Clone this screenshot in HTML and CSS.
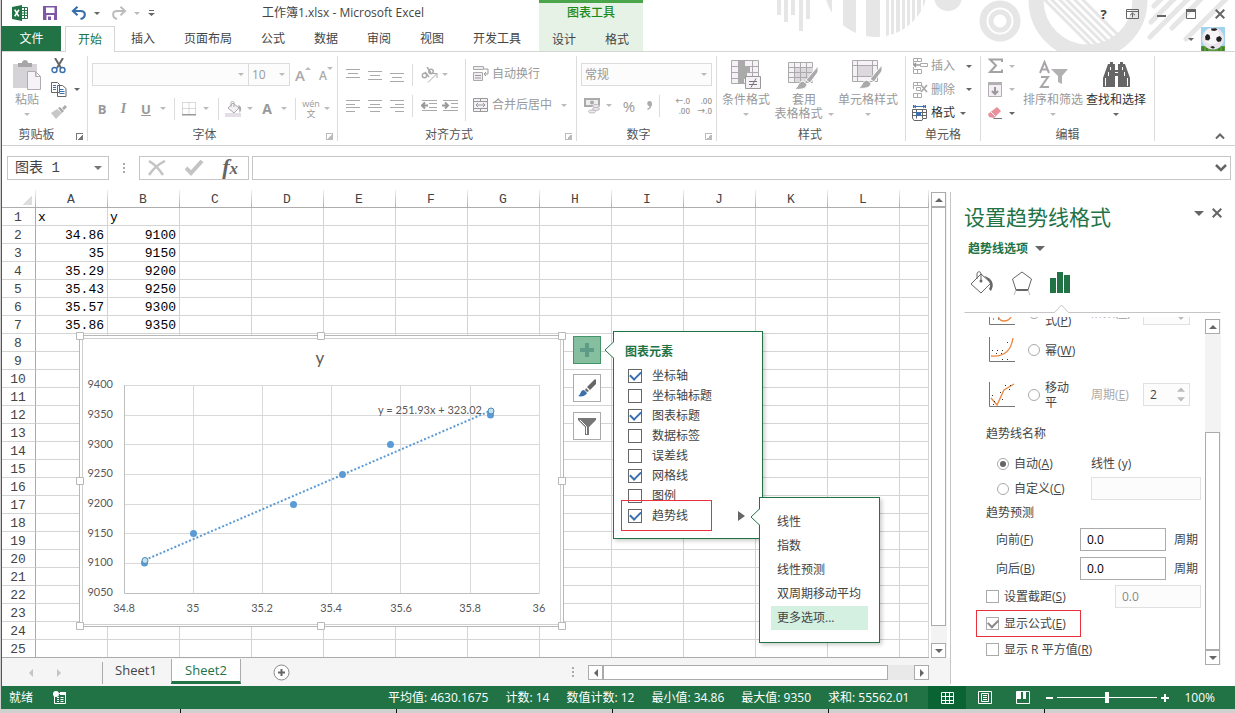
FILE: index.html
```html
<!DOCTYPE html>
<html lang="zh-CN">
<head>
<meta charset="utf-8">
<title>工作簿1.xlsx - Microsoft Excel</title>
<link rel="stylesheet" href="styles.css">
</head>
<body>
<div class="window">
<header class="header">
  <svg class="header-art" width="475" height="51" viewBox="760 0 475 51" aria-hidden="true">
    <defs>
      <clipPath id="disc"><circle cx="876" cy="-15" r="52"/></clipPath>
      <clipPath id="hole"><circle cx="1088" cy="0" r="46"/></clipPath>
    </defs>
    <g fill="#e6e6e6">
      <path d="M777 0h4v15h-4zM784 0h4v22h-4zM791 0h4v15h-4zM799 0h4v31h-4zM806 0h4v19h-4z"/>
      <path clip-path="url(#disc)" d="M822 0h10v51h-10zM843 0h13v51h-13zM866 0h14v51h-14zM886 0h3v51h-3zM891 0h3v51h-3zM896 0h4v51h-4zM902 0h3v51h-3zM907 0h3v51h-3zM912 0h3v51h-3zM917 0h4v51h-4zM923 0h3v51h-3z"/>
      <circle cx="948" cy="-3" r="14"/>
    </g>
    <g fill="none" stroke="#e6e6e6">
      <circle cx="1000" cy="21" r="17" stroke-width="7"/>
      <circle cx="1000" cy="21" r="9" stroke-width="5"/>
      <circle cx="1088" cy="0" r="52" stroke-width="15"/>
      <path clip-path="url(#hole)" stroke-width="3" d="M1036-9l65 65M1043-9l65 65M1051-9l65 65M1058-9l65 65M1066-9l65 65M1074-9l65 65"/>
      <path stroke-width="5" stroke-linecap="round" d="M1154 6l12-12M1151 22l28-28M1150 37l43-43M1172 28l34-34M1189 36l42-42M1186 39l10-10"/>
    </g>
  </svg>
  <div class="header-main">
    <div class="titlebar">
      <div class="quick">
        <svg width="17" height="16" viewBox="0 0 17 16"><path fill="#217346" d="M0 2l10-2v16L0 14z"/><path fill="none" stroke="#217346" d="M10 2.500h5.500v11H10M12.500 3v10M10 5.500h5M10 8h5M10 10.500h5"/><path stroke="#fff" stroke-width="1.600" d="M2.700 4.700l4 6.600M6.900 4.700l-4.200 6.600"/></svg>
        <button class="bare" aria-label="保存"><svg width="14" height="14" viewBox="0 0 14 14"><path fill="#7e57a5" d="M0 0h14v14H0z"/><path fill="#fff" d="M3 1.500h8.500V7H3zM3.500 9h7.500v5H3.500z"/><path fill="#7e57a5" d="M5 10.500h3V14H5z"/></svg></button>
        <button class="bare with-caret" aria-label="撤消"><svg width="16" height="14" viewBox="0 0 16 14"><path fill="none" stroke="#3a6fae" stroke-width="2.200" d="M6.500 .8L2 5l4.500 4.200M2 5h7.500c6 0 5.500 6.500 0 8"/></svg><i class="caret"></i></button>
        <button class="bare with-caret off" aria-label="恢复"><svg width="16" height="14" viewBox="0 0 16 14"><path fill="none" stroke="#bcbcbc" stroke-width="2" d="M9.500 .8L14 5 9.500 9.200M14 5H6.500C.5 5 1 11.500 6 13"/></svg><i class="caret"></i></button>
        <button class="bare" aria-label="自定义快速访问工具栏"><svg width="7" height="6" viewBox="0 0 7 6"><path fill="#666" d="M1 0h5v1H1zM0 3h7L3.500 6z"/></svg></button>
      </div>
      <div class="title">工作簿1.xlsx - Microsoft Excel</div>
    </div>
    <nav class="tabs">
      <button class="tab file">文件</button><button class="tab active">开始</button><button class="tab">插入</button><button class="tab">页面布局</button><button class="tab">公式</button><button class="tab">数据</button><button class="tab">审阅</button><button class="tab">视图</button><button class="tab">开发工具</button>
    </nav>
  </div>
  <div class="context">
    <div class="context-title">图表工具</div>
    <nav class="tabs"><button class="tab">设计</button><button class="tab">格式</button></nav>
  </div>
  <div class="header-end">
    <div class="win-buttons">
      <button class="bare help" aria-label="帮助">?</button>
      <button class="bare" aria-label="功能区显示选项"><svg width="13" height="10" viewBox="0 0 13 10"><path fill="none" stroke="#666" d="M.5 .5h12v9H.5zM.5 2.500h12M6.500 8.500V4M4 6.200L6.500 4 9 6.200"/></svg></button>
      <button class="bare" aria-label="最小化"><svg width="9" height="10" viewBox="0 0 9 10"><path fill="#666" d="M0 6h9v2H0z"/></svg></button>
      <button class="bare" aria-label="最大化"><svg width="10" height="10" viewBox="0 0 10 10"><path fill="none" stroke="#666" d="M.5 1h9v8.500h-9z"/><path fill="#666" d="M0 0h10v3H0z"/></svg></button>
      <button class="bare" aria-label="关闭"><svg width="10" height="10" viewBox="0 0 10 10"><path stroke="#666" stroke-width="2" d="M.7 .7l8.600 8.600M9.300 .7L.7 9.300"/></svg></button>
    </div>
    <div class="account">
      <i class="caret"></i>
      <svg width="24" height="24" viewBox="0 0 24 24"><path fill="#9fd3ee" d="M0 0h24v24H0z"/><path fill="#5a9a3c" d="M0 19h24v5H0z"/><path stroke="#2f6d21" d="M2 20v4M6 21v3M18 21v3M22 20v4"/><circle cx="12" cy="11.500" r="11" fill="#e9e3ea"/><circle cx="11" cy="9.500" r="8" fill="#f8f5f8"/><path fill="#222" d="M10 1.500l5-.2 1.500 1.500-3 1.200-3-.6zM4 9.500l2-2.500 2.500 1 .8 3.500L7.500 13.500 4.500 13zM15.500 10.500l3-1.500 2.300 2.300-.8 3-3 .7-1.800-2zM9 20l3-1 2 1.500-2 1.200z"/></svg>
    </div>
  </div>
</header>

<section class="ribbon">
  <div class="group g-clip launch">
    <div class="group-body">
      <button class="big"><svg width="28" height="30" viewBox="0 0 28 30"><path fill="#d6d3d6" d="M0 4h24v24H0z"/><path fill="#a9a6a9" d="M5 3h4c0-4 6-4 6 0h4v4H5z"/><path fill="#f6f3f8" stroke="#b0adb2" d="M14.500 11.500h8l5 5v13h-13zM22.500 11.500v5h5"/></svg><span>粘贴</span><i class="caret"></i></button>
      <div class="stack3">
        <button class="bare"><svg width="16" height="16" viewBox="0 0 16 16"><path stroke="#666" stroke-width="2" d="M4 0l6 10M12 0L6 10"/><g fill="none" stroke="#3a6fae" stroke-width="1.400"><circle cx="3.500" cy="12" r="2.500"/><circle cx="11.500" cy="12" r="2.500"/></g></svg></button>
        <button class="bare with-caret"><svg width="16" height="15" viewBox="0 0 16 15"><g fill="#fff" stroke="#666"><path d="M.5 .5h6l2 2v8h-8zM6.500 3.500h5l3.500 3v8H6.500z"/></g><path stroke="#3a6fae" d="M2 3.500h3M2 5.500h3M2 7.500h3M8.500 7.500h4M8.500 9.500h5M8.500 11.500h5"/></svg><i class="caret"></i></button>
        <button class="bare"><svg width="16" height="14" viewBox="0 0 16 14"><path fill="#c9c6ca" d="M0 8l6-4 5 4-6 6z"/><path fill="#aaa" d="M7 3l2-1 4 4-2 2zM11 3l3-3 2 2-3 3z"/></svg></button>
      </div>
    </div>
    <div class="group-name">剪贴板</div><i class="launcher dark"></i>
  </div>
  <div class="group g-font off launch">
    <div class="group-body rows">
      <div class="font-row1"><div class="combo"><span></span><i class="caret"></i></div><div class="combo"><span>10</span><i class="caret"></i></div><div class="grow"><b>A</b><i class="caret flip"></i></div><div class="shrink"><b>A</b><i class="caret"></i></div></div>
      <div class="font-row2">
        <button class="bare"><b>B</b></button><button class="bare"><em>I</em></button><button class="bare"><u>U</u></button><i class="caret"></i><i class="sep"></i>
        <svg width="14" height="14" viewBox="0 0 14 14"><path fill="none" stroke="#b9b6b9" stroke-dasharray="1 1" d="M.5 .5h13v12H.5zM7 .5v12M.5 6.500h13"/><path fill="#999" d="M0 12h14v1.500H0z"/></svg><i class="caret"></i><i class="sep"></i>
        <svg width="17" height="16" viewBox="0 0 17 16"><path fill="#e4dfe6" d="M0 12h16v4H0z"/><path fill="#f4f0f5" stroke="#aaa" d="M3 7l5-5 6 5-5 5z"/><path fill="none" stroke="#aaa" d="M6 6V1.500C6 0 9 0 9 1.500V6"/><path fill="#aaa" d="M13 4c4 1 4 5 1.500 8L14 7z"/></svg><i class="caret"></i><button class="bare fontcolor"><b>A</b></button><i class="caret"></i><i class="sep"></i>
        <span class="pinyin">wén<br>文</span><i class="caret"></i>
      </div>
    </div>
    <div class="group-name">字体</div><i class="launcher"></i>
  </div>
  <div class="group g-align off launch">
    <div class="group-body">
      <div class="align-grid">
        <svg width="14" height="14"><path stroke="#aaa" d="M0 1.500h14M2 5.500h10M0 9.500h14"/></svg>
        <svg width="14" height="14"><path stroke="#aaa" d="M0 3.500h14M2 7.500h10M0 11.500h14"/></svg>
        <svg width="14" height="14"><path stroke="#aaa" d="M0 5.500h14M2 9.500h10M0 13.500h14"/></svg>
        <i class="sep"></i>
        <svg width="17" height="16" viewBox="0 0 17 16"><path fill="none" stroke="#aaa" d="M7 15.500l9-9M12 6.500h4V11"/><g fill="none" stroke="#aaa" stroke-width="1.500"><circle cx="3.500" cy="8.500" r="2.200"/><path d="M4 5l4 5"/><circle cx="10" cy="4.500" r="2.200"/><path d="M6 0l4 6"/></g></svg>
        <i class="caret"></i>
        <svg width="14" height="12"><path stroke="#aaa" d="M0 .5h14M0 4.500h9M0 7.500h14M0 11.500h9"/></svg>
        <svg width="14" height="12"><path stroke="#aaa" d="M0 .5h14M2 4.500h10M0 7.500h14M2 11.500h10"/></svg>
        <svg width="14" height="12"><path stroke="#aaa" d="M0 .5h14M5 4.500h9M0 7.500h14M5 11.500h9"/></svg>
        <i class="sep"></i>
        <svg width="17" height="12"><path stroke="#aaa" d="M1 .5h15M8 3.500h8M8 7.500h8M1 10.500h15"/><path fill="none" stroke="#999" stroke-width="2" d="M7 5.500H1M4 2.500l-3 3 3 3"/></svg>
        <svg width="17" height="12"><path stroke="#aaa" d="M1 .5h15M9 3.500h7M9 7.500h7M1 10.500h15"/><path fill="none" stroke="#999" stroke-width="2" d="M0 5.500h6M3 2.500l3 3-3 3"/></svg>
      </div>
      <div class="align-text">
        <button class="bare row"><svg width="16" height="16" viewBox="0 0 16 16"><path fill="#efebf1" stroke="#aaa" d="M.5 .5h10v3H.5zM.5 6.500h9v8H.5z"/><path fill="none" stroke="#999" d="M2 9.500h6M2 12h6M11 3h4v5h-4M13 6l-2 2 2 2"/></svg><span>自动换行</span></button>
        <button class="bare row"><svg width="16" height="15" viewBox="0 0 16 15"><path fill="#f4f1f6" stroke="#999" d="M.5 .5h14v13H.5zM.5 3.500h14M.5 10.500h14M7.500 .5v3M7.500 10.500v3M3 7h9M5 5L3 7l2 2M10 5l2 2-2 2"/></svg><span>合并后居中</span><i class="caret"></i></button>
      </div>
    </div>
    <div class="group-name">对齐方式</div><i class="launcher"></i>
  </div>
  <div class="group g-num off launch">
    <div class="group-body rows">
      <div class="combo"><span>常规</span><i class="caret"></i></div>
      <div class="num-row"><svg width="17" height="16" viewBox="0 0 17 16"><path fill="#eee" stroke="#aaa" stroke-width="2" d="M1 1h14v7H1z"/><circle cx="8" cy="4.500" r="2" fill="#aaa"/><g fill="#efe9f0" stroke="#bbb"><ellipse cx="12" cy="8" rx="3.500" ry="1.500"/><ellipse cx="12" cy="11" rx="3.500" ry="1.500"/><ellipse cx="8" cy="13.500" rx="3.500" ry="1.500"/></g></svg><i class="caret"></i><button class="bare pct">%</button><button class="bare comma" aria-label="千位分隔样式"><svg width="5" height="9" viewBox="0 0 5 9"><path fill="#aaa" d="M2.500 0C6 0 6 6 1 9L0 8c2-1 2.500-2 2.500-3C-.5 5-.5 0 2.500 0z"/></svg></button><i class="sep"></i><span class="dec">←.0<br>.00</span><span class="dec">.00<br>→.0</span></div>
    </div>
    <div class="group-name">数字</div><i class="launcher"></i>
  </div>
  <div class="group g-style off">
    <div class="group-body">
      <button class="big"><svg width="31" height="30" viewBox="0 0 31 30"><path fill="#f6f1f7" stroke="#aaa" d="M.5 .5h27v23H.5zM7.500 .5v23M21.500 .5v23M.5 6.500h27M.5 12.500h27M.5 18.500h27"/><path fill="#aaa" d="M8 1h6v5H8zM8 7h11v5H8zM8 13h8v5H8zM8 19h5v5H8z"/><path fill="#f6f1f7" stroke="#999" d="M14.500 16.500h15v12h-15z"/><path stroke="#777" d="M18 21.500h8M18 24.500h8M25 18.500l-5 9"/></svg><span>条件格式</span><i class="caret"></i></button>
      <button class="big"><svg width="31" height="30" viewBox="0 0 31 30"><path fill="#f6f1f7" stroke="#aaa" d="M.5 2.500h24v20H.5z"/><path fill="#dcd8de" d="M7 7h18v15H7z"/><path fill="none" stroke="#aaa" d="M6.500 2v20M12.500 2v20M18.500 2v20M.5 7.500h24M.5 12.500h24M.5 17.500h24"/><path fill="#aaa" stroke="#fff" d="M30 6v6l-8 11-4-3zM6 29c5-1 3-7 9-8l4 3c0 5-7 6-13 5z"/></svg><span>套用<br>表格格式<i class="caret"></i></span></button>
      <button class="big"><svg width="31" height="30" viewBox="0 0 31 30"><path fill="#f6f1f7" stroke="#aaa" d="M.5 .5h25v21H.5zM5.500 .5v21M20.500 .5v21M.5 5.500h25M.5 16.500h25"/><path fill="#dcd8de" d="M6 6h14v10H6z"/><path fill="#aaa" stroke="#fff" d="M30 5v6l-8 11-4-3zM6 28c5-1 3-7 9-8l4 3c0 5-7 6-13 5z"/></svg><span>单元格样式</span><i class="caret"></i></button>
    </div>
    <div class="group-name">样式</div>
  </div>
  <div class="group g-cell">
    <div class="group-body cell-rows">
      <button class="bare row dim"><svg width="16" height="16" viewBox="0 0 16 16"><path fill="none" stroke="#aaa" d="M1.500 .5h8v3h-8zM5.500 .5v3M1.500 11.500h8v4h-8zM5.500 11.500v4M1.500 4v3M1.500 9v2M8.500 5.500h7v3h-7z"/><path fill="none" stroke="#999" stroke-width="1.500" d="M8 7H2M4 5L2 7l2 2"/></svg><span>插入</span><i class="caret"></i></button>
      <button class="bare row dim"><svg width="16" height="16" viewBox="0 0 16 16"><path fill="none" stroke="#aaa" d="M1.500 .5h8v3h-8zM5.500 .5v3M1.500 11.500h8v4h-8zM5.500 11.500v4M1.500 4v3M4.500 5.500h4v3h-4z"/><path stroke="#aaa" stroke-width="1.800" d="M9 3l6 7M15 3l-6 7"/></svg><span>删除</span><i class="caret"></i></button>
      <button class="bare row"><svg width="16" height="16" viewBox="0 0 16 16"><path fill="none" stroke="#3a6fae" d="M1.500 0v3M13.500 0v3M1 1.500h13M4 0L2 1.500 4 3M11 0l2 1.500L11 3"/><path fill="none" stroke="#666" d="M.5 4.500h14v9H11l-1 2H2L.5 13zM4.500 4.500v9M10.500 4.500v9M.5 7.500h14M.5 10.500h14"/><path fill="#3a6fae" d="M4 7h5v4H4z"/></svg><span>格式</span><i class="caret near"></i></button>
    </div>
    <div class="group-name">单元格</div>
  </div>
  <div class="group g-edit">
    <div class="group-body">
      <div class="cell-rows edit-rows">
        <button class="bare row off"><svg width="15" height="16" viewBox="0 0 15 16"><path fill="none" stroke="#a5a2a5" stroke-width="2" d="M14 4V1.500H2L8 7.500 2 14h12v-2.500"/></svg><i class="caret"></i></button>
        <button class="bare row off"><svg width="15" height="15" viewBox="0 0 15 15"><path fill="#f3eff5" stroke="#b3b0b3" d="M.5 .5h13v14H.5z"/><path fill="#b3b0b3" d="M0 0h14v3H0z"/><path fill="none" stroke="#999" stroke-width="2" d="M7 5v7M4 9l3 3 3-3"/></svg><i class="caret"></i></button>
        <button class="bare row"><svg width="15" height="13" viewBox="0 0 15 13"><path fill="#e8909c" d="M9 0l4 4-7 7-5-1-1-3z"/><path stroke="#fff" d="M3 5l4 4"/><path fill="#777" d="M6 11h8v1H5z"/></svg><i class="caret"></i></button>
      </div>
      <button class="big off"><svg width="29" height="28" viewBox="0 0 29 28"><path fill="none" stroke="#a9a6a9" stroke-width="2" d="M1 12L5.500 1 10 12M3 8.500h5M2 16h7L2 26h8"/><path fill="#b3b0b3" d="M12 8h17l-6 7v8l-4-2v-6z"/></svg><span>排序和筛选</span><i class="caret"></i></button>
      <button class="big"><svg width="27" height="26" viewBox="0 0 27 26"><path fill="#666" d="M5 2h2V0h3v2h2v6h3V2h2V0h3v2h2l5 14v9H15v-11h-3v11H0v-9z"/><path stroke="#fff" fill="none" d="M2.500 16v8M24.500 16v8M7.500 5v3M19.500 5v3M5.500 10v4M21.500 10v4M12 10.500h3"/></svg><span>查找和选择</span><i class="caret"></i></button>
    </div>
    <div class="group-name">编辑</div>
  </div>
  <button class="bare collapse" aria-label="折叠功能区"><svg width="10" height="7" viewBox="0 0 10 7"><path fill="none" stroke="#666" stroke-width="2" d="M1 5.500l4-4 4 4"/></svg></button>
</section>

<section class="formula-bar">
  <div class="namebox"><span>图表 1</span><i class="caret"></i></div>
  <i class="dots"></i>
  <div class="fx-box">
    <button class="bare" aria-label="取消"><svg width="18" height="16" viewBox="0 0 18 16"><path fill="none" stroke="#c4c4c4" stroke-width="2.500" d="M1 1c5 3 10 8 14 14M17 1C11 4 5 9 1 15"/></svg></button>
    <button class="bare" aria-label="输入"><svg width="19" height="16" viewBox="0 0 19 16"><path fill="none" stroke="#c4c4c4" stroke-width="4" d="M1 8l5 5L17 1"/></svg></button>
    <button class="bare fx" aria-label="插入函数"><i>f<small>x</small></i></button>
  </div>
  <label class="formula"><input type="text" aria-label="编辑栏"><svg width="12" height="8" viewBox="0 0 12 8"><path fill="none" stroke="#666" stroke-width="2.500" d="M1 1l5 5 5-5"/></svg></label>
</section>

<main class="main">
  <section class="book">
    <div class="sheet-row">
      <div class="sheet">
        <table class="grid" id="grid"></table>
        <figure class="chart">
          <svg width="486" height="296" viewBox="78 333 486 296">
            <path fill="#fff" stroke="#b8b8b8" d="M79.500 335.500h484v291h-484z"/>
            <path fill="none" stroke="#d0d0d0" d="M82.500 338.500h478v286h-478z"/>
            <path fill="none" stroke="#d9d9d9" d="M124 385.500h415M124 415.500h415M124 444.500h415M124 474.500h415M124 504.500h415M124 533.500h415M124 563.500h415M193.500 385v208M262.500 385v208M331.500 385v208M400.500 385v208M470.500 385v208M539.500 385v208"/>
            <path fill="none" stroke="#bfbfbf" d="M124.500 385v208.500h415"/>
            <g class="axis end"><text x="113" y="388">9400</text><text x="113" y="418">9350</text><text x="113" y="448">9300</text><text x="113" y="477">9250</text><text x="113" y="507">9200</text><text x="113" y="537">9150</text><text x="113" y="566">9100</text><text x="113" y="596">9050</text></g>
            <g class="axis mid"><text x="124" y="612">34.8</text><text x="193" y="612">35</text><text x="262" y="612">35.2</text><text x="331" y="612">35.4</text><text x="401" y="612">35.6</text><text x="470" y="612">35.8</text><text x="539" y="612">36</text></g>
            <text class="chart-title" x="320" y="364">y</text>
            <text class="equation" x="378" y="414">y = 251.93x + 323.02</text>
            <path stroke="#5b9bd5" stroke-width="2" stroke-dasharray="2 2" d="M145 560L490 411"/>
            <g fill="#5b9bd5"><circle cx="144.500" cy="563" r="3.500"/><circle cx="193.500" cy="533.500" r="3.500"/><circle cx="293.500" cy="504.500" r="3.500"/><circle cx="342.500" cy="474.500" r="3.500"/><circle cx="390.500" cy="444.500" r="3.500"/><circle cx="490.500" cy="415" r="3.500"/></g>
            <g fill="#bfe3f2" stroke="#4f86b0"><circle cx="145" cy="560.500" r="3"/><circle cx="491" cy="411" r="3"/></g>
            <g fill="#fff" stroke="#b8b8b8"><path d="M76.500 332.500h7v7h-7zM317.500 332.500h7v7h-7zM558.500 332.500h7v7h-7zM76.500 477.500h7v7h-7zM558.500 477.500h7v7h-7zM76.500 622.500h7v7h-7zM317.500 622.500h7v7h-7zM558.500 622.500h7v7h-7z"/></g>
          </svg>
        </figure>
        <div class="chart-tools">
          <button class="on" aria-label="图表元素"><svg width="14" height="14"><path fill="#5f9c88" d="M5 0h4v5h5v4H9v5H5V9H0V5h5z"/></svg></button>
          <button aria-label="图表样式"><svg width="18" height="18" viewBox="0 0 18 18"><path fill="#666" d="M17 0l1 1v4l-6 6-3-3z"/><path fill="#666" d="M8 9l3 3-2 1-2-2z"/><path fill="#3a6fae" d="M0 17c3-1 2-6 6-6l3 3c-1 3-6 4-9 3z"/></svg></button>
          <button aria-label="图表筛选器"><svg width="18" height="17" viewBox="0 0 18 17"><path fill="#777" d="M0 0h18v2l-7 7v8H7V9L0 2z"/><path fill="none" stroke="#fff" d="M2 2l6.500 6.500V16"/></svg></button>
        </div>
        <div class="popup elements">
          <svg class="notch" width="10" height="18" viewBox="0 0 10 18"><path fill="#fff" stroke="#217346" d="M10 .5L1 9l9 8.500"/></svg>
          <h3>图表元素</h3>
          <label><input type="checkbox" checked><span>坐标轴</span></label>
          <label><input type="checkbox"><span>坐标轴标题</span></label>
          <label><input type="checkbox" checked><span>图表标题</span></label>
          <label><input type="checkbox"><span>数据标签</span></label>
          <label><input type="checkbox"><span>误差线</span></label>
          <label><input type="checkbox" checked><span>网格线</span></label>
          <label><input type="checkbox"><span>图例</span></label>
          <label><input type="checkbox" checked><span>趋势线</span><i class="more"></i></label>
          <div class="mark"></div>
        </div>
        <div class="popup submenu">
          <svg class="notch" width="10" height="18" viewBox="0 0 10 18"><path fill="#fff" stroke="#217346" d="M10 .5L1 9l9 8.500"/></svg>
          <button>线性</button><button>指数</button><button>线性预测</button><button>双周期移动平均</button><button class="hot">更多选项...</button>
        </div>
      </div>
      <div class="scroll-v"><i class="sb up"></i><i class="thumb"></i><i class="sb down"></i></div>
    </div>
    <div class="sheet-tabs">
      <div class="nav"><i class="tri left"></i><i class="tri right"></i></div>
      <button class="stab">Sheet1</button><button class="stab current">Sheet2</button>
      <button class="bare add" aria-label="新工作表"><svg width="17" height="17" viewBox="0 0 17 17"><circle cx="8.500" cy="8.500" r="7.500" fill="#fff" stroke="#888"/><path stroke="#666" stroke-width="2" d="M8.500 5v7M5 8.500h7"/></svg></button>
      <i class="dots"></i>
      <div class="scroll-h"><i class="sb lt"></i><i class="thumb"></i><i class="sb rt"></i></div>
    </div>
  </section>

  <aside class="pane">
    <div class="pane-head"><h2>设置趋势线格式</h2><i class="caret big-caret"></i><button class="bare" aria-label="关闭窗格"><svg width="10" height="10" viewBox="0 0 10 10"><path stroke="#666" stroke-width="2" d="M.7 .7l8.600 8.600M9.300 .7L.7 9.300"/></svg></button></div>
    <div class="pane-sub">趋势线选项<i class="caret big-caret"></i></div>
    <div class="pane-icons">
      <svg width="24" height="24" viewBox="0 0 24 24"><path fill="none" stroke="#666" d="M1 13L11 3l10 9-10 10zM7 8V3c0-3 4-3 4 0v7"/><circle cx="11" cy="10" r="1.500" fill="#666"/><path fill="#666" d="M14 5c8 2 11 8 7 15l-2-2c3-5 0-8-5-13z"/></svg>
      <svg width="22" height="24" viewBox="0 0 22 24"><path fill="none" stroke="#666" d="M11 1l9.500 7-3.500 11H5L1.500 8z"/><path stroke="#666" stroke-width="2" d="M5 19h12"/><path fill="none" stroke="#bbb" d="M5 19l-2 5M17 19l2 5"/></svg>
      <svg width="20" height="22" viewBox="0 0 20 22"><path fill="#217346" d="M0 6h6v15H0zM7 0h6v21H7zM14 3h6v18h-6z"/></svg>
    </div>
    <svg class="pane-line" height="9" viewBox="0 0 256 9"><path fill="none" stroke="#c6c6c6" d="M0 8.500h90l7-7.500 7 7.500h152"/></svg>
    <div class="pane-scroll">
      <form class="options">
        <div class="opt poly"><svg width="27" height="26" viewBox="0 0 27 26"><path fill="none" stroke="#777" d="M1.500 0v24.500H27"/><path fill="none" stroke="#ed8b45" stroke-width="1.400" d="M8 0c1 18 3 21 8 21s8-4 9-10"/><path stroke="#333" stroke-dasharray="1 4" d="M5 19h8M14 16h6"/></svg><label><input type="radio" name="kind"><span>多项<br>式(<u>P</u>)</span></label><span class="dimtext">阶数(<u>D</u>)</span><span class="spin"><input type="text" aria-label="阶数"><i class="arrows"></i></span></div>
        <div class="opt power"><svg width="27" height="26" viewBox="0 0 27 26"><path fill="none" stroke="#777" d="M1.500 0v24.500H27"/><path fill="none" stroke="#ed8b45" stroke-width="1.400" d="M3 19c12 1 20-4 22-18"/><path stroke="#333" stroke-dasharray="1 4" d="M4 13.500h12M8 16.500h9M14 22.500h7M19 5.500h2"/></svg><label><input type="radio" name="kind"><span>幂(<u>W</u>)</span></label></div>
        <div class="opt moving"><svg width="27" height="26" viewBox="0 0 27 26"><path fill="none" stroke="#777" d="M1.500 0v24.500H27"/><path fill="none" stroke="#ed8b45" stroke-width="1.400" d="M3 16l6 7 7-15 10-6"/><path stroke="#333" stroke-dasharray="1 4" d="M4 13.500h2M6 19.500h2M5 22.500h2M12 10.500h2M14 17.500h2M17 3.500h6M21 7.500h5"/></svg><label><input type="radio" name="kind"><span>移动<br>平</span></label><span class="dimtext">周期(<u>E</u>)</span><span class="spin"><input type="text" value="2" aria-label="周期"><i class="arrows"></i></span></div>
        <h4 class="h-name">趋势线名称</h4>
        <div class="opt name"><label><input type="radio" name="title" checked><span>自动(<u>A</u>)</span></label><span>线性 (y)</span></div>
        <div class="opt name"><label><input type="radio" name="title"><span>自定义(<u>C</u>)</span></label><input class="text faint" type="text" aria-label="自定义名称"></div>
        <h4>趋势预测</h4>
        <div class="opt fore"><label for="fwd"><span>向前(<u>F</u>)</span></label><input class="text" id="fwd" type="text" value="0.0"><span>周期</span></div>
        <div class="opt fore"><label for="bwd"><span>向后(<u>B</u>)</span></label><input class="text" id="bwd" type="text" value="0.0"><span>周期</span></div>
        <div class="opt check"><label><input type="checkbox"><span>设置截距(<u>S</u>)</span></label><input class="text faint" type="text" value="0.0" aria-label="截距"></div>
        <div class="opt check marked"><label><input type="checkbox" checked><span>显示公式(<u>E</u>)</span></label></div>
        <div class="opt check last"><label><input type="checkbox"><span>显示 R 平方值(<u>R</u>)</span></label></div>
      </form>
      <div class="scroll-v"><i class="sb up"></i><i class="gap"></i><i class="thumb"></i><i class="sb down"></i></div>
    </div>
  </aside>
</main>

<footer class="status">
  <span>就绪</span>
  <svg width="14" height="13" viewBox="0 0 14 13"><path fill="none" stroke="#fff" d="M1.500 5v7.500h11v-10H6M4 6.500h2M7.500 6.500h3M4 8.500h2M7.500 8.500h3M4 10.500h2M7.500 10.500h3"/><path fill="#fff" d="M7 1h6v3H7z"/><circle cx="3" cy="3" r="3" fill="#fff"/></svg>
  <div class="stats"><span>平均值: 4630.1675</span><span>计数: 14</span><span>数值计数: 12</span><span>最小值: 34.86</span><span>最大值: 9350</span><span>求和: 55562.01</span></div>
  <div class="views">
    <button class="bare on" aria-label="普通"><svg width="13" height="12" viewBox="0 0 13 12"><path fill="none" stroke="#fff" d="M.5 .5h12v11H.5zM4.500 .5v11M8.500 .5v11M.5 4.500h12M.5 8.500h12"/></svg></button>
    <button class="bare" aria-label="页面布局"><svg width="14" height="13" viewBox="0 0 14 13"><path fill="none" stroke="#fff" d="M.5 .5h13v12H.5zM3.500 2.500h7v8h-7zM5 4.500h4M5 6.500h4M5 8.500h4"/></svg></button>
    <button class="bare" aria-label="分页预览"><svg width="14" height="13" viewBox="0 0 14 13"><path fill="none" stroke="#fff" d="M.5 .5h13v12H.5z"/><path fill="#fff" d="M1 1h4v7H1zM7 1h3v7H7z"/></svg></button>
  </div>
  <div class="zoom"><button class="bare" aria-label="缩小"><svg width="7" height="8"><path fill="#fff" d="M0 3h7v2H0z"/></svg></button><input type="range" min="0" max="100" value="50" aria-label="显示比例"><button class="bare" aria-label="放大"><svg width="8" height="8"><path fill="#fff" d="M0 3h3V0h2v3h3v2H5v3H3V5H0z"/></svg></button></div>
  <span class="pct-zoom">100%</span>
</footer>
</div>
<script src="script.js"></script>
</body>
</html>
```
FILE: styles.css
```css
* { box-sizing: border-box; }
body {
  margin: 0; height: 100vh; padding: 0 0 4px 1px; overflow: hidden;
  background: repeating-linear-gradient(to right, #d0d0d0 0 180px, #111 180px 181px, #d0d0d0 181px 216px);
  font: 12px/16px "Open Sans", "Noto Sans CJK SC", sans-serif; color: #444;
}
button, input { font: inherit; color: inherit; }
button { cursor: pointer; }
svg { display: block; flex: none; }
.window { height: 100%; display: flex; flex-direction: column; background: #fff; border-left: 1px solid #217346; }
.bare { border: 0; background: none; padding: 0; display: flex; align-items: center; justify-content: center; }
.caret { width: 0; height: 0; flex: none; border: 3px solid transparent; border-top-color: #666; border-bottom: 0; }
.off .caret { border-top-color: #bbb; }
.caret.flip { transform: rotate(180deg); }
.big-caret { border-width: 5px 5px 0; }

/* header */
.header { position: relative; display: flex; flex: none; height: 52px; border-bottom: 1px solid #d5d5d5; }
.header-art { position: absolute; right: 0; top: 0; }
.header-main { width: 537px; flex: none; display: flex; flex-direction: column; }
.titlebar { height: 27px; display: flex; align-items: center; }
.quick { display: flex; align-items: center; gap: 14px; padding-left: 10px; width: 260px; }
.with-caret { gap: 7px; }
.quick .with-caret.off { margin-left: 4px; }
.quick .with-caret.off { margin-right: -6px; margin-left: -3px; }
.title { white-space: nowrap; }
.tabs { display: flex; height: 25px; gap: 3px; }
.tab { border: 0; background: none; padding: 0 13px; height: 25px; white-space: nowrap; }
.tab.file { background: #217346; color: #fff; width: 59px; margin-right: 1px; }
.tab.active { border: 1px solid #d5d5d5; border-bottom: 0; padding: 0 12px; color: #217346; background: #fff; height: 26px; }
.context { flex: none; background: #e6f2e6; border-top: 3px solid #4ba54b; width: 104px; }
.context-title { height: 24px; padding-top: 2px; text-align: center; font-weight: 500; color: #1a8a1a; }
.header-end { position: relative; flex: 1; display: flex; flex-direction: column; align-items: flex-end; }
.win-buttons { height: 27px; display: flex; padding-right: 1px; }
.win-buttons button { width: 29px; }
.help { font-weight: 700; font-size: 13px; }
.account { display: flex; align-items: center; gap: 7px; padding-right: 10px; }

/* ribbon */
.ribbon { flex: none; display: flex; height: 94px; border-bottom: 1px solid #d0d0d0; position: relative; }
.group { position: relative; flex: none; margin: 4px 0; border-right: 1px solid #dcdcdc; display: flex; flex-direction: column; padding: 0 4px; }
.group-body { flex: 1; display: flex; min-height: 0; }
.group-name { flex: none; text-align: center; height: 14px; line-height: 15px; color: #555; }
.launch .group-name { padding-right: 16px; }
.launcher { position: absolute; right: 4px; bottom: 1px; width: 7px; height: 7px; border: 1px solid #bbb; border-width: 1px 0 0 1px; background: linear-gradient(135deg, transparent 50%, #bbb 50%); }
.launcher.dark { border-color: #777; background: linear-gradient(135deg, transparent 50%, #777 50%); }
.off .group-body, .big.off, .dim { color: #999; }
.sep { width: 1px; height: 22px; background: #dcdcdc; }
.big { border: 0; background: none; padding: 4px 0 0; display: flex; flex-direction: column; align-items: center; line-height: 14px; white-space: nowrap; }
.big svg { height: 30px; margin-bottom: 3px; }
.big > .caret { margin-top: 6px; }
.big span .caret { display: inline-block; margin: 0 0 2px 5px; }
.g-clip { width: 86px; }
.g-clip .big { width: 42px; color: #999; }
.g-clip .big .caret { border-top-color: #bbb; }
.stack3 { display: flex; flex-direction: column; justify-content: space-between; align-items: flex-start; padding: 2px 0 8px 3px; }
.g-font { width: 250px; }
.rows { flex-direction: column; gap: 8px; padding-top: 7px; }
.combo { flex: none; height: 23px; border: 1px solid #dcdcdc; background: #fcfcfc; display: flex; align-items: center; justify-content: space-between; padding: 0 4px 0 3px; }
.font-row1 { display: grid; grid-template-columns: 157px 41px 21px 22px; }
.font-row1 .combo + .combo { border-left: 0; }
.grow, .shrink { display: flex; justify-content: flex-end; font-size: 15px; line-height: 24px; color: #aaa; }
.shrink { font-size: 12px; line-height: 26px; }
.grow .caret, .shrink .caret { margin-top: 4px; }
.grow b, .shrink b { font-weight: 600; }
.font-row2 { display: grid; grid-template-columns: 20px 23px 22px 12px 10px 20px 14px 10px 20px 14px 20px 14px 9px 22px 10px; align-items: center; justify-items: center; height: 23px; color: #999; }
.font-row2 em { font-family: "Liberation Serif", serif; font-size: 14px; font-weight: 700; }
.font-row2 b, .font-row2 u { font-weight: 700; font-size: 13px; }
.fontcolor b { font-size: 14px; }
.pinyin { font-size: 9px; line-height: 10px; text-align: center; }
.g-align { width: 239px; padding: 0 4px 0 8px; }
.launch.g-align .group-name { padding-right: 20px; }
.align-grid { display: grid; grid-template-columns: 22px 22px 22px 9px 21px 23px; grid-template-rows: 31px 31px; align-items: center; border-right: 1px solid #dcdcdc; margin: 3px 0 6px; width: 120px; }
.align-text { display: flex; flex-direction: column; justify-content: space-between; padding: 10px 0 14px 7px; }
.row { gap: 3px; white-space: nowrap; justify-content: flex-start; }
.align-text .caret { margin-left: 6px; }
.g-num { width: 140px; }
.num-row { display: grid; grid-template-columns: 24px 16px 16px 22px 9px 22px 22px; align-items: center; height: 23px; }
.num-row svg { margin-left: 3px; }
.num-row > .caret { margin-left: 1px; }
.pct { font-size: 15px; }
.dec { font-size: 8px; line-height: 10px; text-align: right; font-weight: 600; white-space: nowrap; }
.g-style { width: 189px; padding: 0 7px 0 5px; }
.g-style .group-body { justify-content: space-between; align-items: flex-start; }
.g-cell { width: 75px; padding: 0 6px; }
.cell-rows { display: flex; flex-direction: column; justify-content: space-between; padding: 2px 0 6px; }
.g-cell .caret { margin-left: 8px; }
.g-cell .near { margin-left: 2px; }
.g-cell .row { color: #333; }
.g-cell .dim { color: #999; }
.g-edit { width: 174px; padding: 0 7px; }
.g-edit .big { width: 64px; margin-left: 1px; color: #333; }
.g-edit .big.off { color: #999; }
.edit-rows { width: 33px; flex: none; padding: 0 0 4px; }
.edit-rows .row { gap: 6px; height: 20px; }
.collapse { position: absolute; right: 10px; bottom: 5px; }

/* formula bar */
.formula-bar { flex: none; display: flex; align-items: center; height: 44px; padding: 0 4px 0 5px; }
.namebox { width: 102px; height: 24px; border: 1px solid #c6c6c6; display: flex; align-items: center; justify-content: space-between; padding: 0 6px 0 7px; font: 14px/20px "Liberation Mono", "Noto Sans CJK SC", monospace; }
.namebox .caret { border-width: 4px 4px 0; border-top-color: #777; }
.dots { width: 2px; height: 11px; margin: 0 14px; background: repeating-linear-gradient(#aaa 0 2px, transparent 2px 4px); }
.fx-box { width: 110px; height: 24px; border: 1px solid #c6c6c6; display: flex; align-items: center; justify-content: space-between; padding: 0 10px 0 8px; margin-right: 3px; }
.fx { font: italic 700 22px/20px "Liberation Serif", serif; color: #666; }
.fx small { font-size: 17px; }
.formula { flex: 1; height: 24px; border: 1px solid #c6c6c6; display: flex; align-items: center; padding-right: 3px; }
.formula input { flex: 1; border: 0; outline: 0; min-width: 0; }

/* worksheet */
.main { flex: 1; display: flex; min-height: 0; }
.book { flex: 1; display: flex; flex-direction: column; min-width: 0; }
.sheet-row { flex: 1; display: flex; min-height: 0; border-bottom: 1px solid #f5f5f5; }
.sheet { position: relative; flex: 1; min-width: 0; overflow: hidden; border-bottom: 1px solid #ababab; }
.grid { table-layout: fixed; border-collapse: separate; border-spacing: 0; width: 100%; font: 13px/14px "Liberation Mono", monospace; color: #000; }
.grid th, .grid td { padding: 3px 3px 0 2px; height: 18px; overflow: hidden; border: 0 solid #d4d4d4; border-width: 0 1px 1px 0; text-align: right; }
.grid th { font-weight: 400; color: #444; text-align: center; }
.grid thead th { border-bottom-color: #ababab; border-image: linear-gradient(#f4f4f4, #ababab) 1; }
.grid tbody th { border-right-color: #ababab; }
.grid td.t { text-align: left; }
.grid .c0 { width: 34px; }
.grid .c { width: 72px; }
.corner::before { content: ""; display: block; width: 10px; height: 10px; margin-left: 18px; background: linear-gradient(135deg, transparent 50%, #ddd 50%); }
.chart { position: absolute; left: 76px; top: 143px; margin: 0; }
.chart svg { overflow: visible; }
.chart text { font-family: Lato, sans-serif; font-size: 11px; fill: #595959; }
.end { text-anchor: end; }
.mid, .chart .chart-title { text-anchor: middle; }
.chart .chart-title { font-size: 17px; }
.chart-tools { position: absolute; left: 571px; top: 146px; display: flex; flex-direction: column; gap: 10px; }
.chart-tools button { width: 28px; height: 28px; padding: 0; border: 1px solid #ababab; background: #fff; display: flex; align-items: center; justify-content: center; }
.chart-tools .on { background: #86bfa0; border-color: #439467; }
.popup { position: absolute; background: #fff; border: 1px solid #217346; box-shadow: 2px 2px 4px rgba(0, 0, 0, .2); }
.notch { position: absolute; left: -10px; top: 9px; }
.elements { left: 611px; top: 141px; width: 150px; height: 208px; padding: 10px 0 0 14px; }
.elements h3 { margin: 0 0 4px -3px; font-size: 12px; line-height: 20px; color: #217346; }
.elements label { display: flex; align-items: center; height: 20px; gap: 10px; }
input[type="checkbox"], input[type="radio"] { appearance: none; margin: 0; width: 14px; height: 14px; flex: none; border: 1px solid #666; background: #fff; display: flex; align-items: center; justify-content: center; }
input[type="checkbox"]:checked::before { content: ""; width: 9px; height: 5px; border: solid #3a6fae; border-width: 0 0 2px 2px; transform: rotate(-45deg); margin-bottom: 3px; }
.more { margin: 0 17px 0 auto; border: solid transparent; border-width: 5px 0 5px 7px; border-left-color: #666; }
.mark { position: absolute; left: 7px; top: 168px; width: 91px; height: 31px; border: 1px solid #e8313a; }
.submenu { left: 757px; top: 307px; width: 121px; padding: 12px 11px; height: 146px; }
.submenu .notch { top: 10px; }
.submenu button { display: block; width: 97px; height: 24px; padding: 0 6px; border: 0; background: none; text-align: left; white-space: nowrap; }
.submenu .hot { background: #d3f0e0; }

.scroll-v { flex: none; width: 16px; display: flex; flex-direction: column; background: #f3f3f3; }
.book .scroll-v { margin: 2px 3px 0 2px; }
.sb { flex: none; width: 15px; height: 15px; border: 1px solid #ababab; background: #fff; display: flex; align-items: center; justify-content: center; }
.sb::before { content: ""; border: 4px solid transparent; }
.up::before { border-top: 0; border-bottom-color: #666; }
.down::before { border-bottom: 0; border-top-color: #666; }
.lt::before { border-left: 0; border-right-color: #666; }
.rt::before { border-right: 0; border-left-color: #666; }
.thumb { border: 1px solid #ababab; background: #fff; }
.scroll-v .thumb { flex: 1; width: 15px; }
.book .scroll-v .thumb { margin-bottom: 17px; }
.sheet-tabs { flex: none; height: 27px; background: #f5f5f5; display: flex; align-items: center; padding-right: 21px; }
.nav { width: 101px; height: 22px; border-right: 1px solid #ababab; display: flex; gap: 24px; padding-left: 27px; align-items: center; }
.tri { border: 4px solid transparent; }
.tri.left { border-left: 0; border-right-color: #c4c4c4; }
.tri.right { border-right: 0; border-left-color: #c4c4c4; }
.stab { border: 0; background: none; padding: 0 2px 3px 0; width: 68px; height: 25px; align-self: flex-start; font-size: 13px; }
.stab.current { background: #fff; color: #217346; border: 1px solid #ababab; border-width: 0 1px 3px; border-bottom-color: #217346; width: 70px; padding: 0; }
.add { margin: 0 auto 0 32px; }
.scroll-h { width: 341px; height: 15px; display: flex; background: #e9e9e9; }
.scroll-h .thumb { flex: 1; margin-right: 26px; }

/* format pane */
.pane { flex: none; width: 285px; border-left: 1px solid #c6c6c6; margin: 2px 0; padding: 0 14px 0 13px; display: flex; flex-direction: column; }
.pane-head { display: flex; align-items: flex-start; height: 44px; padding: 10px 0 0; }
.pane-head h2 { margin: 0 auto 0 0; font-size: 21px; line-height: 30px; font-weight: 400; color: #217346; }
.pane-head .caret { margin: 9px 8px 0 0; }
.pane-head button { margin: 6px -1px 0 0; }
.pane-sub { display: flex; align-items: center; gap: 7px; height: 25px; padding-left: 4px; font-weight: 700; color: #217346; }
.pane-icons { display: flex; gap: 17px; align-items: center; height: 40px; margin-bottom: 3px; padding: 3px 0 0 6px; }
.pane-line { width: 100%; }
.pane-scroll { flex: 1; min-height: 0; display: flex; margin: 4px 0 19px; }
.pane .scroll-v { margin-top: 2px; }
.pane .gap { flex: 99; }
.pane .scroll-v .thumb { flex: 218; }
.options { flex: 1; min-width: 0; overflow: hidden; display: flex; flex-direction: column; justify-content: flex-end; padding: 0 4px 3px 22px; }
.opt { flex: none; display: flex; align-items: center; position: relative; }
.opt label { display: flex; align-items: center; gap: 5px; flex: none; line-height: 15px; }
.opt > svg { width: 27px; margin: 0 13px 0 2px; }
.options input[type="radio"] { width: 12px; height: 12px; border-radius: 50%; border-color: #aaa; }
.options input[type="radio"]:checked::before { content: ""; width: 6px; height: 6px; border-radius: 50%; background: #666; }
.options input[type="checkbox"] { border-color: #aaa; width: 13px; height: 13px; }
.options input[type="checkbox"]:checked::before { border-color: #888; width: 8px; }
.poly { height: 30px; }
.power { height: 44px; }
.moving { height: 45px; }
.poly label, .moving label { width: 63px; }
.dimtext { color: #aaa; width: 52px; }
.spin { display: flex; align-items: center; width: 47px; height: 23px; border: 1px solid #e0e0e0; background: #fcfcfc; padding-right: 4px; }
.spin input { width: 100%; min-width: 0; border: 0; background: none; padding: 0 6px; }
.arrows { flex: none; width: 8px; height: 14px; background: #bbb; clip-path: polygon(50% 0, 100% 30%, 0 30%, 0 70%, 100% 70%, 50% 100%, 0 70%, 0 30%); }
.options h4 { flex: none; margin: 0; font-size: 12px; font-weight: 400; line-height: 24px; }
.options .h-name { line-height: 34px; }
.name { height: 25px; padding-left: 11px; }
.name label { width: 94px; }
.text { width: 86px; height: 23px; border: 1px solid #ababab; padding: 0 6px; color: #000; background: #fff; border-radius: 0; }
.text.faint { border-color: #e0e0e0; background: #fcfcfc; color: #888; }
.name .text { width: 110px; }
.fore { height: 29px; padding-left: 10px; }
.fore label { width: 84px; }
.fore .text { margin-right: 8px; }
.check { height: 27px; }
.check .text { margin-left: auto; }
.marked { align-self: flex-start; width: 105px; margin-left: -10px; padding-left: 9px; border: 1px solid #e8313a; }
.last { height: 25px; }

/* status bar */
.status { flex: none; height: 23px; display: flex; align-items: center; background: #217346; color: #fff; padding: 0 20px 0 7px; white-space: nowrap; }
.status > svg { margin-left: 20px; }
.stats { margin: 0 19px 0 auto; display: flex; gap: 17px; }
.views { display: flex; align-self: stretch; }
.views button { width: 38px; }
.views .on { background: #0a6332; }
.zoom { display: flex; align-items: center; margin: 0 15px 0 4px; }
.zoom input { appearance: none; width: 100px; height: 12px; margin: 0 4px; background: linear-gradient(#fff, #fff) center / 100% 1px no-repeat; }
.zoom input::-webkit-slider-thumb { appearance: none; width: 4px; height: 11px; background: #fff; }
```
FILE: script.js
```js
const letters = ["A", "B", "C", "D", "E", "F", "G", "H", "I", "J", "K", "L", ""];
const data = [["x", "y"], ["34.86", "9100"], ["35", "9150"], ["35.29", "9200"], ["35.43", "9250"], ["35.57", "9300"], ["35.86", "9350"]];
const head = letters.map(l => `<th class="${l ? "c" : ""}">${l}</th>`).join("");
let body = "";
for (let r = 0; r < 25; r++) {
  const cells = letters.map((_, c) => `<td${r === 0 ? ' class="t"' : ""}>${(data[r] || [])[c] || ""}</td>`).join("");
  body += `<tr><th>${r + 1}</th>${cells}</tr>`;
}
document.getElementById("grid").innerHTML =
  `<thead><tr><th class="c0 corner"></th>${head}</tr></thead><tbody>${body}</tbody>`;
```
